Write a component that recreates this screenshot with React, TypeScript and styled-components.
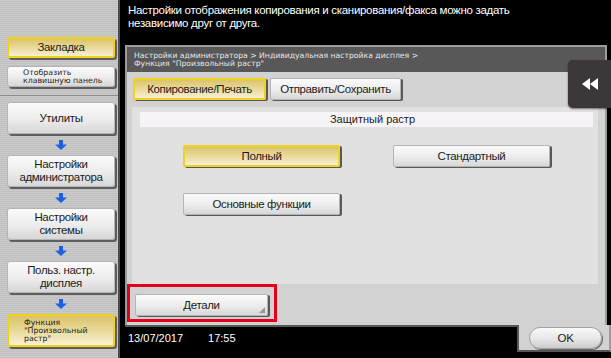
import React from "react";
import styled, { createGlobalStyle, css } from "styled-components";

const SANS = '"Liberation Sans", Arial, sans-serif';
const WIDE = '"DejaVu Sans", Verdana, sans-serif';

const GlobalStyle = createGlobalStyle`
  html, body { margin: 0; padding: 0; background: #000; }
  body {
    width: 611px; height: 358px; overflow: hidden;
    font-family: ${SANS};
  }
  * { box-sizing: border-box; }
`;

const Screen = styled.div`
  display: flex;
  width: 611px;
  height: 358px;
  background: #000;
`;

/* ---------- Sidebar ---------- */
const Sidebar = styled.aside`
  width: 120px;
  flex: none;
  border-right: 2px solid #4c4c4c;
  background: repeating-linear-gradient(180deg, #cacaca 0 1px, #c1c1c1 1px 2px);
  display: flex;
  flex-direction: column;
`;

const SideTop = styled.div`
  height: 96px;
  border-bottom: 1px solid #8c8c8c;
  padding: 37px 0 0 7px;
  display: flex;
  flex-direction: column;
  gap: 8px;
`;

const SideFlow = styled.div`
  padding: 6px 0 0 7px;
  display: flex;
  flex-direction: column;
`;

const yellowFace = css`
  border: 2px solid #f0d21e;
  background: linear-gradient(180deg, #dcc46c 0%, #ebdc9e 55%, #f6f0d6 100%);
`;
const whiteFace = css`
  border: 1px solid #b4b4b4;
  background: linear-gradient(180deg, #fbfbfb 0%, #ececec 55%, #d7d7d7 100%);
`;

const SideButton = styled.div<{ $active?: boolean; $small?: boolean; $h: number }>`
  width: 108px;
  height: ${(p) => p.$h}px;
  border-radius: 3px;
  box-shadow: 2px 2px 0 #5e5e5e;
  display: flex;
  align-items: center;
  justify-content: ${(p) => (p.$small ? "flex-start" : "center")};
  text-align: ${(p) => (p.$small ? "left" : "center")};
  padding-left: ${(p) => (p.$small ? "15px" : "0")};
  color: #1c1c1c;
  font-size: ${(p) => (p.$small ? "7.8px" : "11.5px")};
  letter-spacing: ${(p) => (p.$small ? "0" : "-0.35px")};
  line-height: ${(p) => (p.$small ? "8px" : "13px")};
  font-family: ${(p) => (p.$small ? WIDE : SANS)};
  ${(p) => (p.$active ? yellowFace : whiteFace)}
`;

const ArrowSlot = styled.div`
  width: 108px;
  height: 21px;
  display: flex;
  align-items: center;
  justify-content: center;
`;

const DownArrow = () => (
  <svg width="12" height="10" viewBox="0 0 12 10">
    <rect x="4" y="0" width="4" height="5" fill="#1f5fe8" />
    <polygon points="0,4.5 12,4.5 6,10" fill="#1f5fe8" />
  </svg>
);

/* ---------- Main ---------- */
const Main = styled.main`
  flex: 1;
  display: flex;
  flex-direction: column;
  background: #000;
`;

const Header = styled.div`
  height: 45px;
  padding: 4px 0 0 8px;
  color: #fff;
  font-size: 11.5px;
  letter-spacing: -0.3px;
  line-height: 13px;
`;

const Panel = styled.section`
  position: relative;
  margin-left: 5px;
  width: 482px;
  height: 280px;
  border: 2px solid #9c9c9c;
  border-bottom: none;
  background: #d2d2d2;
  display: flex;
  flex-direction: column;
`;

const Breadcrumb = styled.div`
  height: 25px;
  background: #585858;
  color: #e6e6e6;
  font-family: ${WIDE};
  font-size: 7.7px;
  line-height: 8px;
  padding: 5px 0 0 7px;
`;

const TabsRow = styled.div`
  display: flex;
  gap: 4px;
  padding: 6px 0 0 6px;
`;

const Btn = styled.div<{ $active?: boolean; $w: number }>`
  width: ${(p) => p.$w}px;
  height: 22px;
  border-radius: 2px;
  box-shadow: 2px 1px 0 #585858;
  display: flex;
  align-items: center;
  justify-content: center;
  color: #1c1c1c;
  font-size: 11.5px;
  letter-spacing: -0.35px;
  position: relative;
  ${(p) => (p.$active ? yellowFace : whiteFace)}
`;

const Inner = styled.div`
  margin: 7px 7px 0 5px;
  height: 177px;
  background: #e1e1e1;
  display: flex;
  flex-direction: column;
`;

const TitleBar = styled.div`
  margin: 5px 5px 0 8px;
  height: 15px;
  background: #f6f4f6;
  color: #222;
  font-size: 11px;
  line-height: 15px;
  text-align: center;
  padding-left: 12px;
`;

const OptionsGrid = styled.div`
  display: grid;
  grid-template-columns: 157px 157px;
  column-gap: 53px;
  row-gap: 26px;
  margin: 18px 0 0 51px;
`;

const Highlight = styled.div`
  width: 150px;
  height: 38px;
  border: 3px solid #e4001b;
  padding: 7px 0 0 5px;
`;

const Corner = styled.span`
  position: absolute;
  right: 2px;
  bottom: 2px;
  width: 0;
  height: 0;
  border-left: 6px solid transparent;
  border-bottom: 6px solid #9a9a9a;
`;

const Rewind = styled.div`
  position: absolute;
  left: 441px;
  top: 13px;
  width: 50px;
  height: 48px;
  border-radius: 5px 0 0 5px;
  background: #3c383a;
  box-shadow: 0 1px 2px rgba(0, 0, 0, 0.5);
  display: flex;
  align-items: center;
  padding-left: 14px;
`;

const Footer = styled.footer`
  flex: 1;
  display: flex;
`;

const FooterLeft = styled.div`
  flex: 1;
  margin-left: 5px;
  border-top: 2px solid #565656;
  padding: 5px 0 0 3px;
  display: flex;
  gap: 25px;
  color: #fff;
  font-size: 11px;
`;

const OkTab = styled.div`
  width: 94px;
  height: 27px;
  background: #d2d2d2;
  border-left: 2px solid #565656;
  border-bottom: 2px solid #565656;
  border-right: 2px solid #9c9c9c;
  padding: 2px 0 0 10px;
`;

const OkButton = styled.div`
  width: 73px;
  height: 22px;
  border-radius: 11px;
  border: 1px solid #a2a2a2;
  background: linear-gradient(180deg, #fafafa 0%, #e6e6e6 55%, #cdcdcd 100%);
  box-shadow: 1px 1px 0 #6a6a6a;
  display: flex;
  align-items: center;
  justify-content: center;
  color: #1c1c1c;
  font-size: 11.5px;
  letter-spacing: -0.3px;
`;

export default function App() {
  return (
    <>
      <GlobalStyle />
      <Screen>
        <Sidebar>
          <SideTop>
            <SideButton $active $h={21}>Закладка</SideButton>
            <SideButton $small $h={21}>
              Отобразить
              <br />
              клавишную панель
            </SideButton>
          </SideTop>
          <SideFlow>
            <SideButton $h={32}>Утилиты</SideButton>
            <ArrowSlot><DownArrow /></ArrowSlot>
            <SideButton $h={32}>Настройки<br />администратора</SideButton>
            <ArrowSlot><DownArrow /></ArrowSlot>
            <SideButton $h={32}>Настройки<br />системы</SideButton>
            <ArrowSlot><DownArrow /></ArrowSlot>
            <SideButton $h={32}>Польз. настр.<br />дисплея</SideButton>
            <ArrowSlot><DownArrow /></ArrowSlot>
            <SideButton $active $small $h={33}>
              Функция
              <br />
              "Произвольный
              <br />
              растр"
            </SideButton>
          </SideFlow>
        </Sidebar>
        <Main>
          <Header>
            Настройки отображения копирования и сканирования/факса можно задать
            <br />
            независимо друг от друга.
          </Header>
          <Panel>
            <Breadcrumb>
              Настройки администратора &gt; Индивидуальная настройка дисплея &gt;
              <br />
              Функция "Произвольный растр"
            </Breadcrumb>
            <TabsRow>
              <Btn $active $w={133}>Копирование/Печать</Btn>
              <Btn $w={131}>Отправить/Сохранить</Btn>
            </TabsRow>
            <Inner>
              <TitleBar>Защитный растр</TitleBar>
              <OptionsGrid>
                <Btn $active $w={157}>Полный</Btn>
                <Btn $w={157}>Стандартный</Btn>
                <Btn $w={157}>Основные функции</Btn>
              </OptionsGrid>
            </Inner>
            <Highlight>
              <Btn $w={133}>
                Детали
                <Corner />
              </Btn>
            </Highlight>
            <Rewind>
              <svg width="16" height="12" viewBox="0 0 16 12">
                <polygon points="8,0 8,12 0,6" fill="#fff" />
                <polygon points="16,0 16,12 8,6" fill="#fff" />
              </svg>
            </Rewind>
          </Panel>
          <Footer>
            <FooterLeft>
              <span>13/07/2017</span>
              <span>17:55</span>
            </FooterLeft>
            <OkTab>
              <OkButton>OK</OkButton>
            </OkTab>
          </Footer>
        </Main>
      </Screen>
    </>
  );
}
